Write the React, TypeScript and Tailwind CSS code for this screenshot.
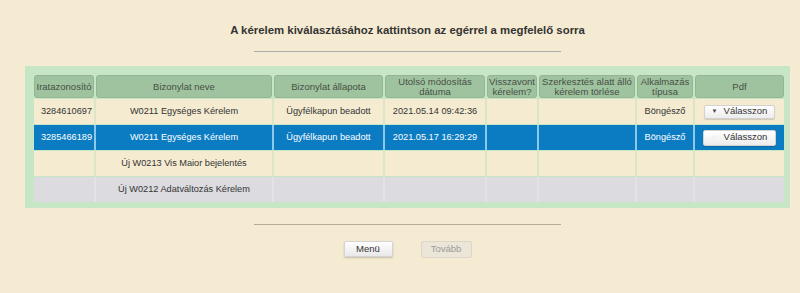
const cols = 'grid grid-cols-[60px_176px_109px_100px_50px_96px_56px_89px] gap-x-[2px]'

const headers = [
    'Iratazonosító',
    'Bizonylat neve',
    'Bizonylat állapota',
    'Utolsó módosítás dátuma',
    'Visszavont kérelem?',
    'Szerkesztés alatt álló kérelem törlése',
    'Alkalmazás típusa',
    'Pdf',
]

type Row = {
    id: string
    name: string
    status: string
    date: string
    app: string
    pdf: boolean
    variant: 'cream' | 'blue' | 'gray'
}

const rows: Row[] = [
    { id: '3284610697', name: 'W0211 Egységes Kérelem', status: 'Ügyfélkapun beadott', date: '2021.05.14 09:42:36', app: 'Böngésző', pdf: true, variant: 'cream' },
    { id: '3285466189', name: 'W0211 Egységes Kérelem', status: 'Ügyfélkapun beadott', date: '2021.05.17 16:29:29', app: 'Böngésző', pdf: true, variant: 'blue' },
    { id: '', name: 'Új W0213 Vis Maior bejelentés', status: '', date: '', app: '', pdf: false, variant: 'cream' },
    { id: '', name: 'Új W0212 Adatváltozás Kérelem', status: '', date: '', app: '', pdf: false, variant: 'gray' },
]

const rowStyles = {
    cream: { row: 'bg-[#dbe6c6]', cell: 'bg-[#f5ebd1] text-[#333]' },
    blue: { row: 'bg-[#8cc8ea]', cell: 'bg-[#0b7cc2] text-white' },
    gray: { row: 'bg-[#e4e2e6]', cell: 'bg-[#dcdbdf] text-[#333]' },
}

const SelectButton = ({ selected }: { selected: boolean }) => (
    <div className={`flex items-center justify-center gap-[6px] rounded-[2px] border border-[#d2d2d2] bg-gradient-to-b from-white to-[#ececec] text-[9.5px] text-[#333] shadow-[0_1px_1px_rgba(0,0,0,0.15)] ${selected ? 'w-[73px] h-[16px]' : 'w-[71px] h-[14px]'}`}>
        <span className={`text-[6px] ${selected ? 'text-[#f0f0f0]' : 'text-[#444]'}`}>▼</span>
        <span>Válasszon</span>
    </div>
)

const App = () => {
    return (
        <div className="w-[800px] h-[293px] bg-[#f5ebd2] font-['Liberation_Sans',Arial,sans-serif] overflow-hidden">
            <div className="ml-[25px] w-[765px] flex flex-col items-center">
                {/* TITLE */}
                <p className="pt-[23px] text-[11.4px] leading-[14px] font-bold text-[#333]">
                    A kérelem kiválasztásához kattintson az egérrel a megfelelő sorra
                </p>
                <div className="mt-[14px] w-[307px] h-px bg-[#ababab]" />

                {/* TABLE PANEL */}
                <div className="mt-[14px] w-full bg-[#c6e6c6] pt-[9px] pb-[6px] px-[9px]">
                    <div className={`${cols} h-[23px]`}>
                        {headers.map(h => (
                            <div key={h} className="flex items-center justify-center rounded-[3px] border border-[#93b592] bg-[#a0c39f] px-px text-center text-[9.5px] leading-[10px] text-[#454f45]">
                                {h}
                            </div>
                        ))}
                    </div>

                    <div className="flex flex-col gap-y-px pt-px">
                        {rows.map((r, i) => {
                            const s = rowStyles[r.variant]
                            const cell = `${s.cell} flex items-center text-[9.2px] h-[25px]`
                            return (
                                <div key={i} className={`${cols} ${s.row}`}>
                                    <div className={`${cell} justify-end pr-[2px]`}>{r.id}</div>
                                    <div className={`${cell} justify-center`}>{r.name}</div>
                                    <div className={`${cell} justify-center`}>{r.status}</div>
                                    <div className={`${cell} justify-center`}>{r.date}</div>
                                    <div className={cell} />
                                    <div className={cell} />
                                    <div className={`${cell} justify-center`}>{r.app}</div>
                                    <div className={`${cell} justify-center`}>
                                        {r.pdf && <SelectButton selected={r.variant === 'blue'} />}
                                    </div>
                                </div>
                            )
                        })}
                    </div>
                </div>

                {/* FOOTER */}
                <div className="mt-[16px] w-[307px] h-px bg-[#b8ab98]" />
                <div className="mt-[16px] flex gap-[28px]">
                    <button className="w-[49px] h-[16px] rounded-[2px] border border-[#d4d4d4] bg-gradient-to-b from-white to-[#e9e9e9] text-[9.5px] text-[#333] shadow-[0_1px_2px_rgba(0,0,0,0.2)]">
                        Menü
                    </button>
                    <button disabled className="w-[51px] h-[17px] rounded-[2px] border border-[#ddd6c6] bg-[#ece6d8] text-[9.5px] text-[#9a9a9a]">
                        Tovább
                    </button>
                </div>
            </div>
        </div>
    )
}

export default App
